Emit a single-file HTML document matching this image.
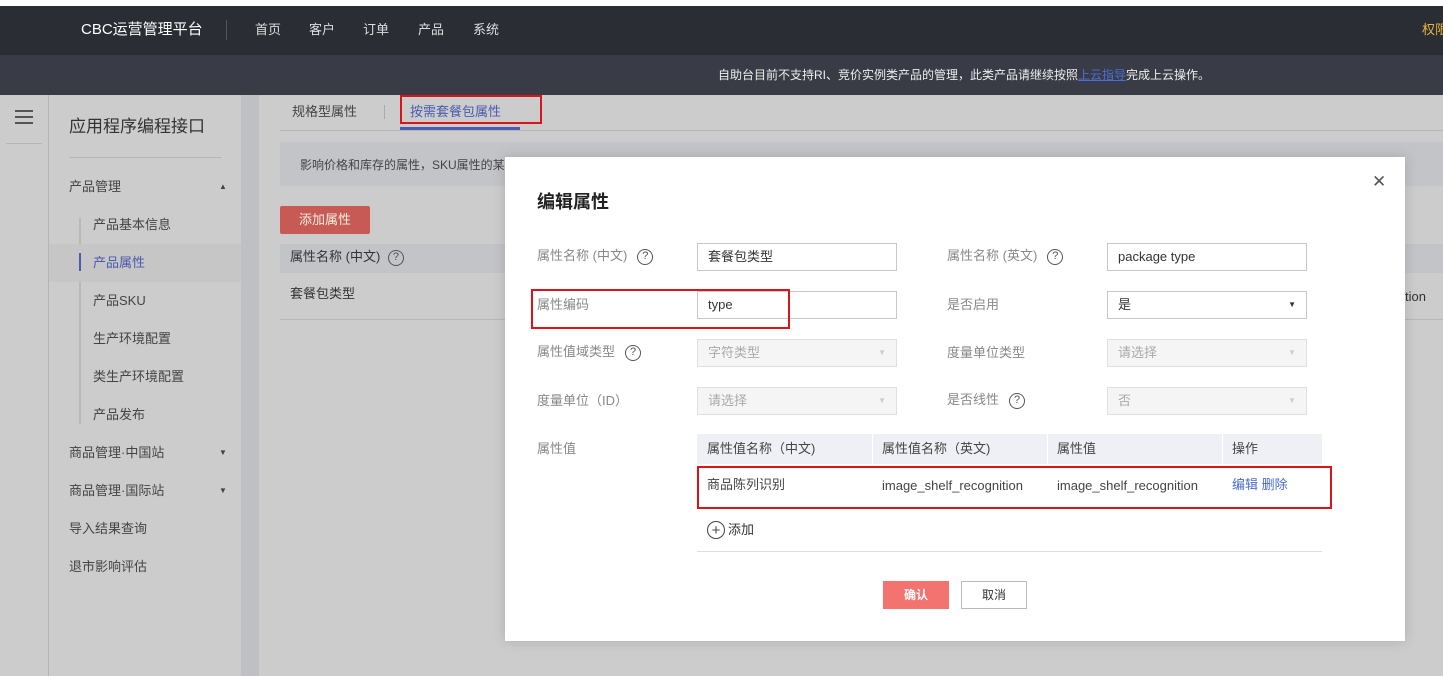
<!DOCTYPE html>
<html><head><meta charset="utf-8"><style>
*{margin:0;padding:0;box-sizing:border-box}
body{width:1443px;height:676px;overflow:hidden;position:relative;background:#cccccc;font-family:"Liberation Sans","Noto Sans CJK SC",sans-serif;font-size:13px;color:#333;line-height:1.2}
.a{position:absolute;white-space:nowrap}
.inp{position:absolute;width:200px;height:28px;border:1px solid #c8c8c8;background:#fff;padding-left:10px;line-height:26px;font-size:13px;color:#333}
.dis{background:#f5f5f5;border-color:#e0e0e0;color:#aaa}
.arr{position:absolute;right:10px;top:0;font-size:8px}
.lbl{position:absolute;color:#888;font-size:13px;white-space:nowrap}
.q{display:inline-block;width:16px;height:16px;border:1.5px solid #555;border-radius:50%;font-size:11px;line-height:13px;text-align:center;color:#555;margin-left:10px;vertical-align:middle}
.red{position:absolute;border:2px solid #d9141b}
.side{position:absolute;left:69px;color:#444;font-size:13px}
.sub{position:absolute;left:93px;color:#444;font-size:13px}
</style></head><body>
<div class="a" style="left:0;top:0;width:1443px;height:6px;background:#fff"></div>
<div class="a" style="left:0;top:6px;width:1443px;height:49px;background:#2b2d35"></div>
<div class="a" style="left:81px;top:21px;color:#fff;font-size:15px">CBC运营管理平台</div>
<div class="a" style="left:226px;top:20px;width:1px;height:20px;background:#555"></div>
<div class="a" style="left:255px;top:22px;color:#ddd">首页</div>
<div class="a" style="left:309px;top:22px;color:#ddd">客户</div>
<div class="a" style="left:363px;top:22px;color:#ddd">订单</div>
<div class="a" style="left:418px;top:22px;color:#ddd">产品</div>
<div class="a" style="left:473px;top:22px;color:#ddd">系统</div>
<div class="a" style="left:1422px;top:22px;color:#e5b53a">权限</div>
<div class="a" style="left:0;top:55px;width:1443px;height:40px;background:#393c46"></div>
<div class="a" style="left:718px;top:68px;color:#eee;font-size:12px">自助台目前不支持RI、竞价实例类产品的管理，此类产品请继续按照<span style="color:#4b6fd8;text-decoration:underline">上云指导</span>完成上云操作。</div>

<div class="a" style="left:48px;top:95px;width:1px;height:581px;background:#b5b5b5"></div>
<div class="a" style="left:15px;top:110px;width:18px;height:2px;background:#555;box-shadow:0 6px 0 #555,0 12px 0 #555"></div>
<div class="a" style="left:6px;top:143px;width:36px;height:1px;background:#b5b5b5"></div>
<div class="a" style="left:69px;top:117px;font-size:17px;color:#333">应用程序编程接口</div>
<div class="a" style="left:69px;top:157px;width:152px;height:1px;background:#b5b5b5"></div>
<div class="side" style="top:179px">产品管理</div><div class="a" style="left:219px;top:182px;font-size:8px;color:#444">▲</div>
<div class="a" style="left:79px;top:218px;width:2px;height:206px;background:#b8b8b8"></div>
<div class="a" style="left:49px;top:244px;width:192px;height:38px;background:#c6c6c6"></div>
<div class="a" style="left:79px;top:253px;width:2px;height:18px;background:#4a5bb0"></div>
<div class="sub" style="top:217px">产品基本信息</div>
<div class="sub" style="top:255px;color:#4a5bb0">产品属性</div>
<div class="sub" style="top:293px">产品SKU</div>
<div class="sub" style="top:331px">生产环境配置</div>
<div class="sub" style="top:369px">类生产环境配置</div>
<div class="sub" style="top:407px">产品发布</div>
<div class="side" style="top:445px">商品管理·中国站</div><div class="a" style="left:219px;top:448px;font-size:8px;color:#444">▼</div>
<div class="side" style="top:483px">商品管理·国际站</div><div class="a" style="left:219px;top:486px;font-size:8px;color:#444">▼</div>
<div class="side" style="top:521px">导入结果查询</div>
<div class="side" style="top:559px">退市影响评估</div>
<div class="a" style="left:241px;top:95px;width:18px;height:581px;background:#bfc0c4"></div>

<div class="a" style="left:292px;top:104px;color:#444">规格型属性</div>
<div class="a" style="left:384px;top:105px;width:1px;height:14px;background:#aaa"></div>
<div class="a" style="left:410px;top:104px;color:#4a5bb0">按需套餐包属性</div>
<div class="a" style="left:400px;top:127px;width:120px;height:3px;background:#4a5bb0"></div>
<div class="a" style="left:280px;top:130px;width:1163px;height:1px;background:#b8b8b8"></div>
<div class="a" style="left:280px;top:142px;width:1163px;height:44px;background:#c3c4c8"></div>
<div class="a" style="left:300px;top:158px;font-size:12px;color:#444">影响价格和库存的属性，SKU属性的某某</div>
<div class="a" style="left:280px;top:206px;width:90px;height:28px;background:#c85a55;border-radius:2px;color:#eed;line-height:28px;text-align:center">添加属性</div>
<div class="a" style="left:280px;top:244px;width:1163px;height:29px;background:#c3c4c8"></div>
<div class="a" style="left:290px;top:249px;color:#333">属性名称 (中文) <span class="q" style="margin-left:4px">?</span></div>
<div class="a" style="left:290px;top:286px;color:#333">套餐包类型</div>
<div class="a" style="left:280px;top:319px;width:1163px;height:1px;background:#b8b8b8"></div>
<div class="a" style="left:1405px;top:289px;color:#333">tion</div>

<div class="a" style="left:505px;top:157px;width:900px;height:484px;background:#fff;box-shadow:0 0 12px rgba(0,0,0,.15)"></div>
<div class="a" style="left:1372px;top:172px;font-size:17px;color:#555">✕</div>
<div class="a" style="left:537px;top:192px;font-size:18px;font-weight:bold;color:#222">编辑属性</div>

<div class="lbl" style="left:537px;top:248px">属性名称 (中文)<span class="q">?</span></div>
<div class="inp" style="left:697px;top:243px">套餐包类型</div>
<div class="lbl" style="left:947px;top:248px">属性名称 (英文)<span class="q">?</span></div>
<div class="inp" style="left:1107px;top:243px">package type</div>

<div class="lbl" style="left:537px;top:297px">属性编码</div>
<div class="inp" style="left:697px;top:291px">type</div>
<div class="lbl" style="left:947px;top:297px">是否启用</div>
<div class="inp" style="left:1107px;top:291px">是<span class="arr" style="color:#333">▼</span></div>

<div class="lbl" style="left:537px;top:344px">属性值域类型<span class="q">?</span></div>
<div class="inp dis" style="left:697px;top:339px">字符类型<span class="arr" style="color:#ccc">▼</span></div>
<div class="lbl" style="left:947px;top:345px">度量单位类型</div>
<div class="inp dis" style="left:1107px;top:339px">请选择<span class="arr" style="color:#ccc">▼</span></div>

<div class="lbl" style="left:537px;top:393px">度量单位（ID）</div>
<div class="inp dis" style="left:697px;top:387px">请选择<span class="arr" style="color:#ccc">▼</span></div>
<div class="lbl" style="left:947px;top:392px">是否线性<span class="q">?</span></div>
<div class="inp dis" style="left:1107px;top:387px">否<span class="arr" style="color:#ccc">▼</span></div>

<div class="lbl" style="left:537px;top:441px">属性值</div>
<div class="a" style="left:697px;top:434px;width:625px;height:30px;background:#eef0f6"></div>
<div class="a" style="left:872px;top:434px;width:1px;height:30px;background:#fff"></div>
<div class="a" style="left:1047px;top:434px;width:1px;height:30px;background:#fff"></div>
<div class="a" style="left:1222px;top:434px;width:1px;height:30px;background:#fff"></div>
<div class="a" style="left:707px;top:441px;color:#444">属性值名称（中文)</div>
<div class="a" style="left:882px;top:441px;color:#444">属性值名称（英文)</div>
<div class="a" style="left:1057px;top:441px;color:#444">属性值</div>
<div class="a" style="left:1232px;top:441px;color:#444">操作</div>
<div class="a" style="left:707px;top:477px;color:#444">商品陈列识别</div>
<div class="a" style="left:882px;top:478px;color:#444">image_shelf_recognition</div>
<div class="a" style="left:1057px;top:478px;color:#444">image_shelf_recognition</div>
<div class="a" style="left:1232px;top:477px;color:#4a6bd0">编辑 删除</div>
<div class="a" style="left:707px;top:521px;width:18px;height:18px;border:1.5px solid #444;border-radius:50%;display:flex;align-items:center;justify-content:center;font-size:15px;line-height:1;color:#444">+</div>
<div class="a" style="left:728px;top:522px">添加</div>
<div class="a" style="left:697px;top:551px;width:625px;height:1px;background:#ddd"></div>
<div class="a" style="left:883px;top:581px;width:66px;height:28px;background:#f27370;color:#fff;line-height:28px;text-align:center;font-size:12px;font-weight:bold">确认</div>
<div class="a" style="left:961px;top:581px;width:66px;height:28px;border:1px solid #bbb;line-height:26px;text-align:center;font-size:12px">取消</div>

<div class="red" style="left:400px;top:95px;width:142px;height:29px"></div>
<div class="red" style="left:531px;top:289px;width:259px;height:40px"></div>
<div class="red" style="left:697px;top:466px;width:635px;height:43px"></div>
</body></html>
